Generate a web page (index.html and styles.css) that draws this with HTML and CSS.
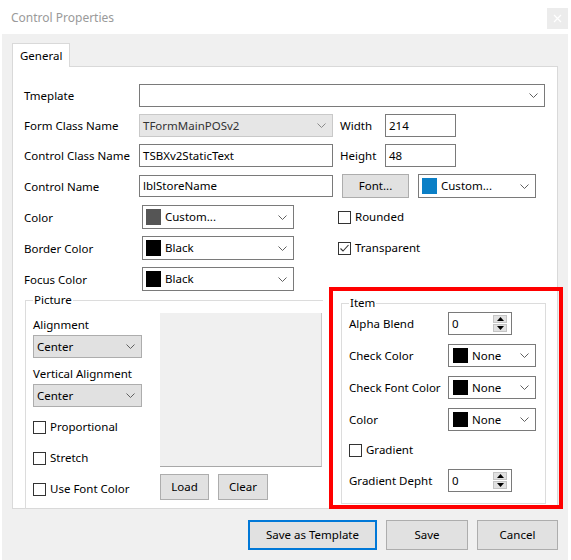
FILE: index.html
```html
<!DOCTYPE html>
<html>
<head>
<meta charset="utf-8">
<link rel="stylesheet" href="styles.css">
</head>
<body>
<div class="window">
  <div class="titlebar">
    <span class="title">Control Properties</span>
    <span class="close"><svg width="9" height="9" viewBox="0 0 9 9"><path d="M1 1L8 8M8 1L1 8" stroke="#fff" stroke-width="1.2"/></svg></span>
  </div>
  <div class="client">
    <div class="tabs"><div class="tab">General</div></div>
    <div class="panel">
      <div class="form">
        <div class="row">
          <span class="lbl">Tmeplate</span>
          <div class="field combo w406"><span></span><svg class="chev" width="9" height="5" viewBox="0 0 9 5"><path d="M0.5 0.5L4.5 4.5L8.5 0.5" fill="none" stroke="#606060"/></svg></div>
        </div>
        <div class="row">
          <span class="lbl">Form Class Name</span>
          <div class="field combo disabled w194"><span>TFormMainPOSv2</span><svg class="chev" width="9" height="5" viewBox="0 0 9 5"><path d="M0.5 0.5L4.5 4.5L8.5 0.5" fill="none" stroke="#8a8a8a"/></svg></div>
          <span class="sublbl">Width</span>
          <div class="field w71"><span>214</span></div>
        </div>
        <div class="row">
          <span class="lbl">Control Class Name</span>
          <div class="field w194"><span>TSBXv2StaticText</span></div>
          <span class="sublbl">Height</span>
          <div class="field w71"><span>48</span></div>
        </div>
        <div class="row tall">
          <span class="lbl">Control Name</span>
          <div class="field w194 h22"><span>lblStoreName</span></div>
          <div class="btn fontbtn">Font...</div>
          <div class="field combo tallfield w118 ml9"><span class="sw-wrap"><span class="swatch blue"></span>Custom...</span><svg class="chev" width="9" height="5" viewBox="0 0 9 5"><path d="M0.5 0.5L4.5 4.5L8.5 0.5" fill="none" stroke="#606060"/></svg></div>
        </div>
        <div class="row tall">
          <span class="lbl wide">Color</span>
          <div class="field combo tallfield w152"><span class="sw-wrap"><span class="swatch gray"></span>Custom...</span><svg class="chev" width="9" height="5" viewBox="0 0 9 5"><path d="M0.5 0.5L4.5 4.5L8.5 0.5" fill="none" stroke="#606060"/></svg></div>
          <label class="check ml44"><span class="box"></span>Rounded</label>
        </div>
        <div class="row tall">
          <span class="lbl wide">Border Color</span>
          <div class="field combo tallfield w152"><span class="sw-wrap"><span class="swatch black"></span>Black</span><svg class="chev" width="9" height="5" viewBox="0 0 9 5"><path d="M0.5 0.5L4.5 4.5L8.5 0.5" fill="none" stroke="#606060"/></svg></div>
          <label class="check ml44"><span class="box"><svg width="11" height="11" viewBox="0 0 11 11"><path d="M1.5 5.5L4 8L9.5 2" fill="none" stroke="#333" stroke-width="1.1"/></svg></span>Transparent</label>
        </div>
        <div class="row tall">
          <span class="lbl wide">Focus Color</span>
          <div class="field combo tallfield w152"><span class="sw-wrap"><span class="swatch black"></span>Black</span><svg class="chev" width="9" height="5" viewBox="0 0 9 5"><path d="M0.5 0.5L4.5 4.5L8.5 0.5" fill="none" stroke="#606060"/></svg></div>
        </div>

        <div class="lower">
          <fieldset class="group picture">
            <legend>Picture</legend>
            <div class="pic-body">
              <div class="pic-left">
                <div class="plabel">Alignment</div>
                <div class="dd"><span>Center</span><svg class="chev" width="9" height="5" viewBox="0 0 9 5"><path d="M0.5 0.5L4.5 4.5L8.5 0.5" fill="none" stroke="#606060"/></svg></div>
                <div class="plabel mt8">Vertical Alignment</div>
                <div class="dd"><span>Center</span><svg class="chev" width="9" height="5" viewBox="0 0 9 5"><path d="M0.5 0.5L4.5 4.5L8.5 0.5" fill="none" stroke="#606060"/></svg></div>
                <label class="check crow first"><span class="box"></span>Proportional</label>
                <label class="check crow"><span class="box"></span>Stretch</label>
                <label class="check crow"><span class="box"></span>Use Font Color</label>
              </div>
              <div class="pic-right">
                <div class="preview"></div>
                <div class="pbtns">
                  <div class="btn load">Load</div>
                  <div class="btn clear">Clear</div>
                </div>
              </div>
            </div>
          </fieldset>

          <fieldset class="group item">
            <legend>Item</legend>
            <div class="irow first">
              <span class="ilbl">Alpha Blend</span>
              <div class="spin"><span>0</span>
                <span class="spinbtns">
                  <span class="sb"><svg width="7" height="4" viewBox="0 0 7 4"><path d="M0 4L3.5 0L7 4Z" fill="#000"/></svg></span>
                  <span class="sb"><svg width="7" height="4" viewBox="0 0 7 4"><path d="M0 0L3.5 4L7 0Z" fill="#000"/></svg></span>
                </span>
              </div>
            </div>
            <div class="irow">
              <span class="ilbl">Check Color</span>
              <div class="field combo w88"><span class="sw-wrap"><span class="swatch black sq"></span>None</span><svg class="chev" width="9" height="5" viewBox="0 0 9 5"><path d="M0.5 0.5L4.5 4.5L8.5 0.5" fill="none" stroke="#606060"/></svg></div>
            </div>
            <div class="irow">
              <span class="ilbl">Check Font Color</span>
              <div class="field combo w88"><span class="sw-wrap"><span class="swatch black sq"></span>None</span><svg class="chev" width="9" height="5" viewBox="0 0 9 5"><path d="M0.5 0.5L4.5 4.5L8.5 0.5" fill="none" stroke="#606060"/></svg></div>
            </div>
            <div class="irow">
              <span class="ilbl">Color</span>
              <div class="field combo w88"><span class="sw-wrap"><span class="swatch black sq"></span>None</span><svg class="chev" width="9" height="5" viewBox="0 0 9 5"><path d="M0.5 0.5L4.5 4.5L8.5 0.5" fill="none" stroke="#606060"/></svg></div>
            </div>
            <label class="check icheck"><span class="box"></span>Gradient</label>
            <div class="irow">
              <span class="ilbl">Gradient Depht</span>
              <div class="spin"><span>0</span>
                <span class="spinbtns">
                  <span class="sb"><svg width="7" height="4" viewBox="0 0 7 4"><path d="M0 4L3.5 0L7 4Z" fill="#000"/></svg></span>
                  <span class="sb"><svg width="7" height="4" viewBox="0 0 7 4"><path d="M0 0L3.5 4L7 0Z" fill="#000"/></svg></span>
                </span>
              </div>
            </div>
          </fieldset>
        </div>
      </div>
    </div>
    <div class="actions">
      <div class="btn pbtn primary">Save as Template</div>
      <div class="btn pbtn save">Save</div>
      <div class="btn pbtn cancel">Cancel</div>
    </div>
  </div>
  <div class="highlight"></div>
</div>
</body>
</html>
```
FILE: styles.css
```css
body {
  margin: 0;
  background: #fff;
  font-family: "Noto Sans", "Open Sans", sans-serif;
  font-size: 11.5px;
  line-height: 16px;
  color: #000;
}
.window {
  position: relative;
  width: 571px;
  height: 560px;
  overflow: hidden;
}
.titlebar {
  height: 34px;
  display: flex;
  justify-content: space-between;
  align-items: flex-start;
}
.title {
  color: #9a9a9a;
  margin: 9px 0 0 11px;
  line-height: 18px;
  font-size: 12px;
}
.close {
  width: 21px;
  height: 21px;
  margin: 8px 3px 0 0;
  background: #ececec;
  display: flex;
  align-items: center;
  justify-content: center;
}
.client {
  background: #f0f0f0;
  margin: 0 3px 0 2px;
  height: 526px;
  box-sizing: border-box;
  padding: 9px 10px 0 10px;
}
.tabs {
  display: flex;
  height: 23px;
}
.tab {
  position: relative;
  z-index: 1;
  width: 58px;
  height: 24px;
  box-sizing: border-box;
  border: 1px solid #d9d9d9;
  border-bottom: none;
  background: #fff;
  padding: 4px 0 0 7px;
}
.panel {
  height: 443px;
  box-sizing: border-box;
  border: 1px solid #d9d9d9;
  background: #fff;
  padding: 17px 0 0 11px;
}
.row {
  display: flex;
  align-items: center;
  height: 23px;
  margin-top: 7px;
}
.row:first-child { margin-top: 0; }
.row.tall { height: 24px; }
.lbl { width: 115px; flex: none; padding-top: 1px; }
.lbl.wide { width: 118px; }
.sublbl { margin-left: 7px; width: 45px; flex: none; }
.field {
  height: 23px;
  box-sizing: border-box;
  border: 1px solid #7a7a7a;
  background: #fff;
  padding: 0 3px;
  display: flex;
  align-items: center;
  flex: none;
  white-space: nowrap;
}
.field.h22 { height: 22px; }
.field.tallfield { height: 24px; }
.combo { justify-content: space-between; padding-right: 6px; }
.disabled { background: #e6e6e6; border-color: #c9c9c9; color: #333; }
.w406 { width: 406px; }
.w194 { width: 194px; }
.w71 { width: 71px; }
.w118 { width: 118px; }
.w152 { width: 152px; }
.w88 { width: 88px; }
.ml9 { margin-left: 9px; }
.ml44 { margin-left: 44px; }
.sw-wrap { display: flex; align-items: center; }
.swatch {
  width: 15px;
  height: 16px;
  margin-right: 4px;
  flex: none;
}
.swatch.sq { height: 15px; margin-left: 1px; }
.swatch.blue { background: #0a7fc6; }
.swatch.gray { background: #555; }
.swatch.black { background: #000; }
.chev { flex: none; }
.btn {
  box-sizing: border-box;
  background: #e1e1e1;
  border: 1px solid #adadad;
  display: flex;
  align-items: center;
  justify-content: center;
  flex: none;
}
.fontbtn { width: 67px; height: 24px; margin-left: 9px; }
.check {
  display: flex;
  align-items: center;
  white-space: nowrap;
}
.box {
  width: 13px;
  height: 13px;
  box-sizing: border-box;
  border: 1px solid #333;
  background: #fff;
  margin-right: 4px;
  display: flex;
  align-items: center;
  justify-content: center;
  flex: none;
}
.lower {
  display: flex;
  align-items: flex-start;
  margin-top: 1px;
}
fieldset.group {
  margin: 0;
  border: 1px solid #dcdcdc;
  padding: 0 7px;
  min-width: 0;
  box-sizing: border-box;
}
fieldset.group legend {
  padding: 0 1px;
  line-height: 16px;
}
.picture {
  width: 298px;
  height: 217px;
  margin-left: 1px !important;
  margin-right: 18px !important;
  border-bottom: none !important;
  border-right: none !important;
}
.pic-body { display: flex; align-items: flex-start; }
.pic-left { width: 109px; margin-top: 9px; flex: none; }
.plabel { line-height: 16px; white-space: nowrap; }
.mt8 { margin-top: 8px; }
.dd {
  width: 109px;
  height: 23px;
  box-sizing: border-box;
  background: #e1e1e1;
  border: 1px solid #adadad;
  margin-top: 2px;
  display: flex;
  justify-content: space-between;
  align-items: center;
  padding: 0 6px 0 3px;
}
.crow { height: 20px; margin-top: 11px; }
.crow.first { margin-top: 10px; }
.pic-right { margin-left: 18px; margin-top: 5px; }
.preview {
  width: 162px;
  height: 154px;
  box-sizing: border-box;
  background: #f0f0f0;
  border-right: 1px solid #c8c8c8;
  border-bottom: 1px solid #a8a8a8;
}
.pbtns { display: flex; margin-top: 7px; }
.load { width: 49px; height: 26px; }
.clear { width: 50px; height: 26px; margin-left: 9px; }
.item {
  width: 205px;
  height: 209px;
  margin-top: 3px !important;
}
.irow {
  display: flex;
  align-items: center;
  height: 23px;
  margin-top: 9px;
}
.irow.first { margin-top: 1px; }
.ilbl { width: 99px; flex: none; white-space: nowrap; }
.spin {
  width: 64px;
  height: 23px;
  box-sizing: border-box;
  border: 1px solid #7a7a7a;
  background: #fff;
  display: flex;
  align-items: center;
  justify-content: space-between;
  padding-left: 3px;
}
.spinbtns {
  display: flex;
  flex-direction: column;
  gap: 1px;
  margin-right: 4px;
}
.sb {
  width: 14px;
  height: 8px;
  box-sizing: border-box;
  background: #e1e1e1;
  border: 1px solid #c4c4c4;
  display: flex;
  align-items: center;
  justify-content: center;
}
.icheck { height: 20px; margin-top: 9px; }
.actions {
  display: flex;
  justify-content: flex-end;
  gap: 9px;
  margin-top: 11px;
}
.pbtn { height: 30px; }
.primary { width: 129px; border: 2px solid #0078d7; }
.save { width: 82px; }
.cancel { width: 81px; }
.highlight {
  position: absolute;
  left: 329px;
  top: 287px;
  width: 234px;
  height: 222px;
  box-sizing: border-box;
  border: 4px solid #ff0000;
  pointer-events: none;
}
```
